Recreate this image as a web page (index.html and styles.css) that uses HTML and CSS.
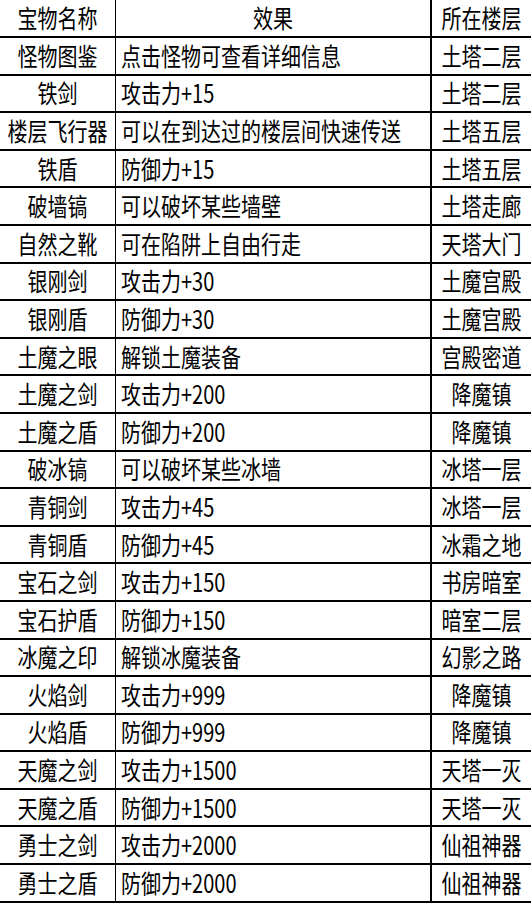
FILE: index.html
```html
<!DOCTYPE html>
<html lang="zh-CN">
<head>
<meta charset="utf-8">
<title>宝物</title>
<link rel="stylesheet" href="styles.css">
</head>
<body>
<div class="table">
  <div class="row head"><div class="c1"><span>宝物名称</span></div><div class="c2 center"><span>效果</span></div><div class="c3"><span>所在楼层</span></div></div>
  <div class="row"><div class="c1"><span>怪物图鉴</span></div><div class="c2"><span>点击怪物可查看详细信息</span></div><div class="c3"><span>土塔二层</span></div></div>
  <div class="row"><div class="c1"><span>铁剑</span></div><div class="c2"><span>攻击力+15</span></div><div class="c3"><span>土塔二层</span></div></div>
  <div class="row"><div class="c1"><span>楼层飞行器</span></div><div class="c2"><span>可以在到达过的楼层间快速传送</span></div><div class="c3"><span>土塔五层</span></div></div>
  <div class="row"><div class="c1"><span>铁盾</span></div><div class="c2"><span>防御力+15</span></div><div class="c3"><span>土塔五层</span></div></div>
  <div class="row"><div class="c1"><span>破墙镐</span></div><div class="c2"><span>可以破坏某些墙壁</span></div><div class="c3"><span>土塔走廊</span></div></div>
  <div class="row"><div class="c1"><span>自然之靴</span></div><div class="c2"><span>可在陷阱上自由行走</span></div><div class="c3"><span>天塔大门</span></div></div>
  <div class="row"><div class="c1"><span>银刚剑</span></div><div class="c2"><span>攻击力+30</span></div><div class="c3"><span>土魔宫殿</span></div></div>
  <div class="row"><div class="c1"><span>银刚盾</span></div><div class="c2"><span>防御力+30</span></div><div class="c3"><span>土魔宫殿</span></div></div>
  <div class="row"><div class="c1"><span>土魔之眼</span></div><div class="c2"><span>解锁土魔装备</span></div><div class="c3"><span>宫殿密道</span></div></div>
  <div class="row"><div class="c1"><span>土魔之剑</span></div><div class="c2"><span>攻击力+200</span></div><div class="c3"><span>降魔镇</span></div></div>
  <div class="row"><div class="c1"><span>土魔之盾</span></div><div class="c2"><span>防御力+200</span></div><div class="c3"><span>降魔镇</span></div></div>
  <div class="row"><div class="c1"><span>破冰镐</span></div><div class="c2"><span>可以破坏某些冰墙</span></div><div class="c3"><span>冰塔一层</span></div></div>
  <div class="row"><div class="c1"><span>青铜剑</span></div><div class="c2"><span>攻击力+45</span></div><div class="c3"><span>冰塔一层</span></div></div>
  <div class="row"><div class="c1"><span>青铜盾</span></div><div class="c2"><span>防御力+45</span></div><div class="c3"><span>冰霜之地</span></div></div>
  <div class="row"><div class="c1"><span>宝石之剑</span></div><div class="c2"><span>攻击力+150</span></div><div class="c3"><span>书房暗室</span></div></div>
  <div class="row"><div class="c1"><span>宝石护盾</span></div><div class="c2"><span>防御力+150</span></div><div class="c3"><span>暗室二层</span></div></div>
  <div class="row"><div class="c1"><span>冰魔之印</span></div><div class="c2"><span>解锁冰魔装备</span></div><div class="c3"><span>幻影之路</span></div></div>
  <div class="row"><div class="c1"><span>火焰剑</span></div><div class="c2"><span>攻击力+999</span></div><div class="c3"><span>降魔镇</span></div></div>
  <div class="row"><div class="c1"><span>火焰盾</span></div><div class="c2"><span>防御力+999</span></div><div class="c3"><span>降魔镇</span></div></div>
  <div class="row"><div class="c1"><span>天魔之剑</span></div><div class="c2"><span>攻击力+1500</span></div><div class="c3"><span>天塔一灭</span></div></div>
  <div class="row"><div class="c1"><span>天魔之盾</span></div><div class="c2"><span>防御力+1500</span></div><div class="c3"><span>天塔一灭</span></div></div>
  <div class="row"><div class="c1"><span>勇士之剑</span></div><div class="c2"><span>攻击力+2000</span></div><div class="c3"><span>仙祖神器</span></div></div>
  <div class="row"><div class="c1"><span>勇士之盾</span></div><div class="c2"><span>防御力+2000</span></div><div class="c3"><span>仙祖神器</span></div></div>
</div>
</body>
</html>
```

FILE: styles.css
```css
html, body {
  margin: 0;
  padding: 0;
  background: #ffffff;
}
.table {
  width: 531px;
  display: flex;
  flex-direction: column;
  font-family: "Noto Sans CJK SC", "DejaVu Sans", sans-serif;
  font-size: 20px;
  color: #000000;
}
.row {
  display: grid;
  grid-template-columns: 116px 316px 1fr;
  height: 37.6px;
  box-sizing: border-box;
  border-bottom: 2px solid #000000;
}
.row.head {
  height: 38px;
}
.row > div {
  display: flex;
  align-items: center;
  justify-content: center;
  overflow: hidden;
  white-space: nowrap;
}
.c1 {
  border-right: 1px solid #000000;
}
.c2 {
  border-right: 2px solid #000000;
  justify-content: flex-start !important;
  padding-left: 5px;
}
.c2.center {
  justify-content: center !important;
  padding-left: 0;
}
.row span {
  display: inline-block;
  line-height: 20px;
  transform: scaleY(1.25);
}
```
